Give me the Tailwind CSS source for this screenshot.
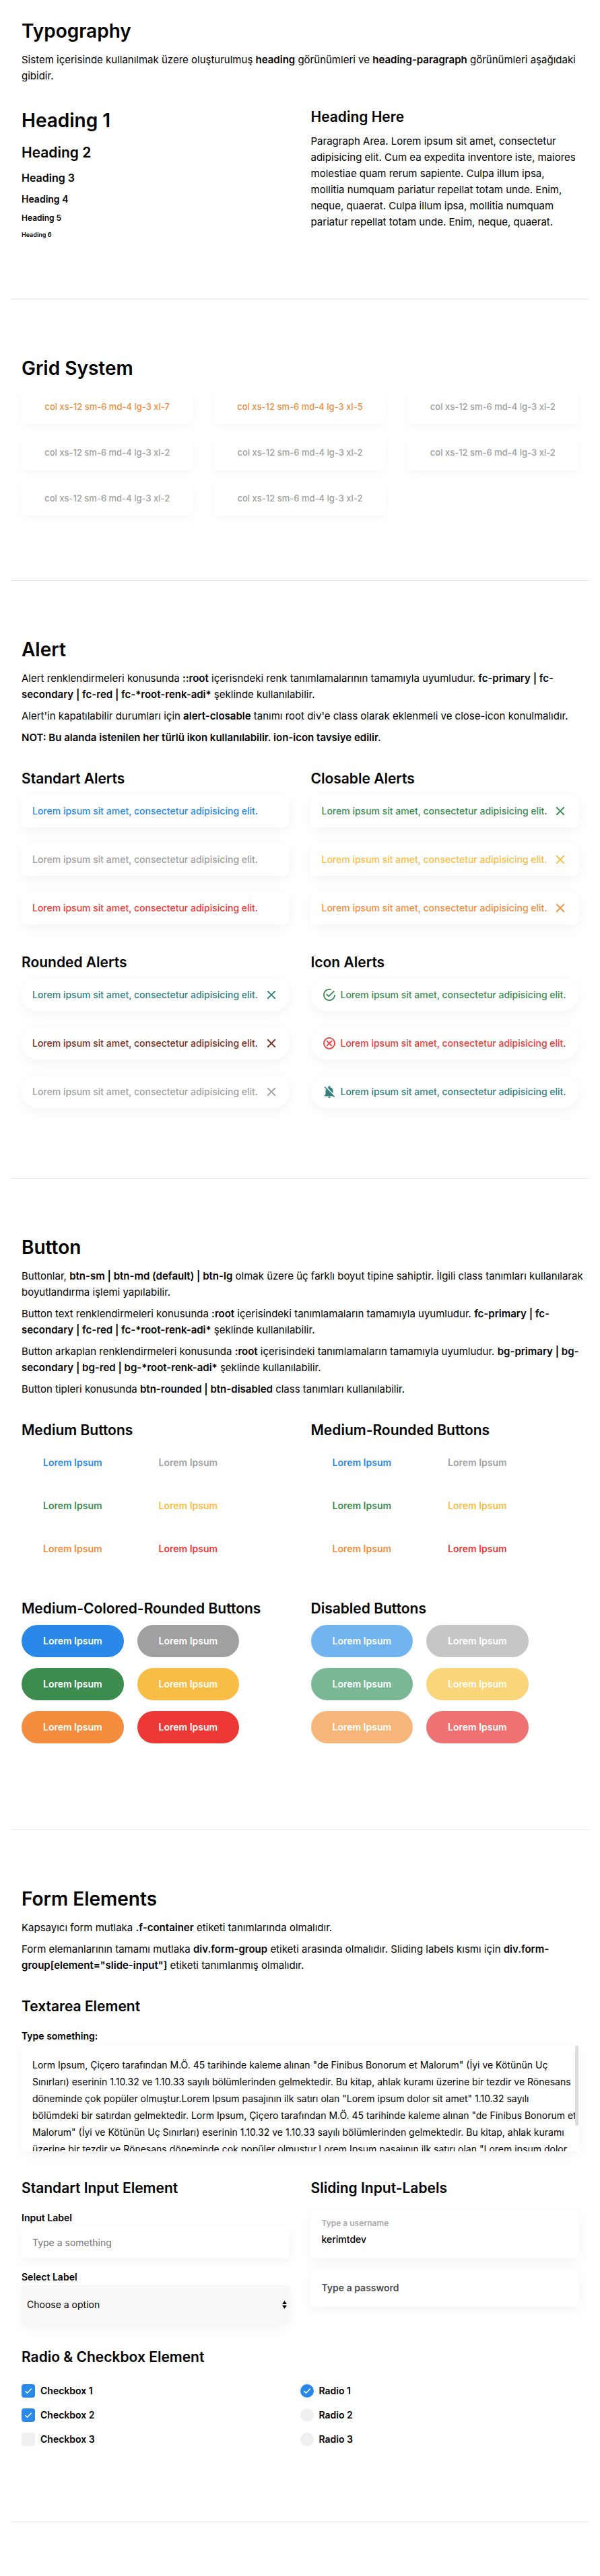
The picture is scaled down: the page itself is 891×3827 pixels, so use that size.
<!DOCTYPE html>
<html lang="tr">
<head>
<meta charset="utf-8">
<meta name="viewport" content="width=device-width, initial-scale=1">
<title>UI Kit</title>
<script src="https://cdn.jsdelivr.net/npm/@tailwindcss/browser@4"></script>
</head>
<body class="bg-white font-[Inter,sans-serif] text-[15px] leading-6 text-black">

<!-- Icon sprite -->
<svg class="hidden" aria-hidden="true">
  <symbol id="i-close" viewBox="0 0 512 512"><path d="M405 136.8L375.2 107 256 226.2 136.8 107 107 136.8 226.2 256 107 375.2 136.8 405 256 285.8 375.2 405 405 375.2 285.8 256z" fill="currentColor"/></symbol>
  <symbol id="i-check-circle" viewBox="0 0 512 512"><path d="M170.7 216.5L141.6 245.6l93.6 93.6 208-208-29.1-29.1L235.2 280l-64.5-63.5zM422.4 256c0 91.5-74.9 166.4-166.4 166.4S89.6 347.5 89.6 256 164.5 89.6 256 89.6c15.6 0 31.2 2.1 45.8 6.2L334 62.6C310 53.2 283 48 256 48 141.6 48 48 141.6 48 256s93.6 208 208 208 208-93.6 208-208h-41.6z" fill="currentColor"/></symbol>
  <symbol id="i-close-circle" viewBox="0 0 512 512"><g fill="none" stroke="currentColor" stroke-width="41"><circle cx="256" cy="256" r="187"/><path d="M167 167l178 178M345 167L167 345"/></g></symbol>
  <symbol id="i-bell-off" viewBox="0 0 24 24"><path d="M20 18.69L7.84 6.14 5.27 3.49 4 4.76l2.8 2.8v.01c-.52.99-.8 2.16-.8 3.42v5l-2 2v1h13.73l2 2L21 19.72l-1-1.03zM12 22c1.11 0 2-.89 2-2h-4c0 1.11.89 2 2 2zm6-7.32V11c0-3.08-1.64-5.64-4.5-6.32V4c0-.83-.67-1.5-1.5-1.5s-1.5.67-1.5 1.5v.68c-.15.03-.29.08-.42.12-.1.03-.2.07-.3.11h-.01c-.01 0-.01 0-.02.01-.23.09-.46.2-.68.31 0 0-.01 0-.01.01L18 14.68z" fill="currentColor"/></symbol>
  <symbol id="i-check" viewBox="0 0 20 20"><path d="M5.5 10.2l3 3 6.2-6.5" fill="none" stroke="#fff" stroke-width="1.5"/></symbol>
</svg>

<main class="px-4 pb-20">

  <!-- Typography -->
  <section class="border-b border-[#e8e8e8] pt-6 pb-20 pl-4">
    <h1 class="mb-2 text-[28px] leading-[45px] font-semibold">Typography</h1>
    <p>Sistem içerisinde kullanılmak üzere oluşturulmuş <b class="font-semibold">heading</b> görünümleri ve <b class="font-semibold">heading-paragraph</b> görünümleri aşağıdaki gibidir.</p>
    <div class="mt-8 mr-4 grid grid-cols-2 gap-x-8">
      <div class="flex flex-col gap-2 pb-2 font-semibold">
        <h1 class="text-[28px] leading-[45px]">Heading 1</h1>
        <h2 class="text-[21px] leading-[33px]">Heading 2</h2>
        <h3 class="text-[16px] leading-[26px]">Heading 3</h3>
        <h4 class="text-[14px] leading-[22px]">Heading 4</h4>
        <h5 class="text-[12px] leading-[18px]">Heading 5</h5>
        <h6 class="text-[9px] leading-[15px]">Heading 6</h6>
      </div>
      <div>
        <h2 class="mb-2 text-[21px] leading-[33px] font-semibold">Heading Here</h2>
        <p>Paragraph Area. Lorem ipsum sit amet, consectetur adipisicing elit. Cum ea expedita inventore iste, maiores molestiae quam rerum sapiente. Culpa illum ipsa, mollitia numquam pariatur repellat totam unde. Enim, neque, quaerat. Culpa illum ipsa, mollitia numquam pariatur repellat totam unde. Enim, neque, quaerat.</p>
      </div>
    </div>
  </section>

  <!-- Grid system -->
  <section class="border-b border-[#e8e8e8] pt-20 pb-24 pl-4">
    <h1 class="mb-2 text-[28px] leading-[45px] font-semibold">Grid System</h1>
    <div class="mr-4 grid grid-cols-3 gap-x-8 gap-y-4 text-center text-[13px] font-medium text-[#a0a0a0]">
      <div class="rounded bg-white px-4 py-[14px] text-[#f38c3c] shadow-[0_5px_15px_rgba(0,0,0,0.03)]">col xs-12 sm-6 md-4 lg-3 xl-7</div>
      <div class="rounded bg-white px-4 py-[14px] text-[#f38c3c] shadow-[0_5px_15px_rgba(0,0,0,0.03)]">col xs-12 sm-6 md-4 lg-3 xl-5</div>
      <div class="rounded bg-white px-4 py-[14px] shadow-[0_5px_15px_rgba(0,0,0,0.03)]">col xs-12 sm-6 md-4 lg-3 xl-2</div>
      <div class="rounded bg-white px-4 py-[14px] shadow-[0_5px_15px_rgba(0,0,0,0.03)]">col xs-12 sm-6 md-4 lg-3 xl-2</div>
      <div class="rounded bg-white px-4 py-[14px] shadow-[0_5px_15px_rgba(0,0,0,0.03)]">col xs-12 sm-6 md-4 lg-3 xl-2</div>
      <div class="rounded bg-white px-4 py-[14px] shadow-[0_5px_15px_rgba(0,0,0,0.03)]">col xs-12 sm-6 md-4 lg-3 xl-2</div>
      <div class="rounded bg-white px-4 py-[14px] shadow-[0_5px_15px_rgba(0,0,0,0.03)]">col xs-12 sm-6 md-4 lg-3 xl-2</div>
      <div class="rounded bg-white px-4 py-[14px] shadow-[0_5px_15px_rgba(0,0,0,0.03)]">col xs-12 sm-6 md-4 lg-3 xl-2</div>
    </div>
  </section>

  <!-- Alerts -->
  <section class="border-b border-[#e8e8e8] pt-20 pb-[104px] pl-4">
    <h1 class="mb-2 text-[28px] leading-[45px] font-semibold">Alert</h1>
    <div class="flex flex-col gap-2">
      <p>Alert renklendirmeleri konusunda <b class="font-semibold">::root</b> içerisndeki renk tanımlamalarının tamamıyla uyumludur. <b class="font-semibold">fc-primary | fc-secondary | fc-red | fc-*root-renk-adi*</b> şeklinde kullanılabilir.</p>
      <p>Alert'in kapatılabilir durumları için <b class="font-semibold">alert-closable</b> tanımı root div'e class olarak eklenmeli ve close-icon konulmalıdır.</p>
      <p class="font-semibold">NOT: Bu alanda istenilen her türlü ikon kullanılabilir. ion-icon tavsiye edilir.</p>
    </div>
    <div class="mt-8 mr-4 grid grid-cols-2 gap-x-8 gap-y-10 text-[14px] font-medium whitespace-nowrap">
      <div class="flex flex-col gap-6">
        <h2 class="-mb-4 text-[21px] leading-[33px] font-semibold">Standart Alerts</h2>
        <div role="alert" class="flex h-12 items-center rounded bg-white px-4 text-[#2988e8] shadow-[0_5px_20px_rgba(0,0,0,0.05)]">Lorem ipsum sit amet, consectetur adipisicing elit.</div>
        <div role="alert" class="flex h-12 items-center rounded bg-white px-4 text-[#a0a0a0] shadow-[0_5px_20px_rgba(0,0,0,0.05)]">Lorem ipsum sit amet, consectetur adipisicing elit.</div>
        <div role="alert" class="flex h-12 items-center rounded bg-white px-4 text-[#ee3835] shadow-[0_5px_20px_rgba(0,0,0,0.05)]">Lorem ipsum sit amet, consectetur adipisicing elit.</div>
      </div>
      <div class="flex flex-col gap-6">
        <h2 class="-mb-4 text-[21px] leading-[33px] font-semibold">Closable Alerts</h2>
        <div role="alert" class="flex h-12 items-center justify-between rounded bg-white px-4 text-[#3c8b4f] shadow-[0_5px_20px_rgba(0,0,0,0.05)]"><span>Lorem ipsum sit amet, consectetur adipisicing elit.</span><button type="button" aria-label="Kapat"><svg class="size-[22px]"><use href="#i-close"/></svg></button></div>
        <div role="alert" class="flex h-12 items-center justify-between rounded bg-white px-4 text-[#f8bd45] shadow-[0_5px_20px_rgba(0,0,0,0.05)]"><span>Lorem ipsum sit amet, consectetur adipisicing elit.</span><button type="button" aria-label="Kapat"><svg class="size-[22px]"><use href="#i-close"/></svg></button></div>
        <div role="alert" class="flex h-12 items-center justify-between rounded bg-white px-4 text-[#f38c3c] shadow-[0_5px_20px_rgba(0,0,0,0.05)]"><span>Lorem ipsum sit amet, consectetur adipisicing elit.</span><button type="button" aria-label="Kapat"><svg class="size-[22px]"><use href="#i-close"/></svg></button></div>
      </div>
      <div class="flex flex-col gap-6">
        <h2 class="-mb-4 text-[21px] leading-[33px] font-semibold">Rounded Alerts</h2>
        <div role="alert" class="flex h-12 items-center justify-between rounded-full bg-white px-4 text-[#31807e] shadow-[0_5px_20px_rgba(0,0,0,0.05)]"><span>Lorem ipsum sit amet, consectetur adipisicing elit.</span><button type="button" aria-label="Kapat"><svg class="size-[22px]"><use href="#i-close"/></svg></button></div>
        <div role="alert" class="flex h-12 items-center justify-between rounded-full bg-white px-4 text-[#7c2d1a] shadow-[0_5px_20px_rgba(0,0,0,0.05)]"><span>Lorem ipsum sit amet, consectetur adipisicing elit.</span><button type="button" aria-label="Kapat"><svg class="size-[22px]"><use href="#i-close"/></svg></button></div>
        <div role="alert" class="flex h-12 items-center justify-between rounded-full bg-white px-4 text-[#a0a0a0] shadow-[0_5px_20px_rgba(0,0,0,0.05)]"><span>Lorem ipsum sit amet, consectetur adipisicing elit.</span><button type="button" aria-label="Kapat"><svg class="size-[22px]"><use href="#i-close"/></svg></button></div>
      </div>
      <div class="flex flex-col gap-6">
        <h2 class="-mb-4 text-[21px] leading-[33px] font-semibold">Icon Alerts</h2>
        <div role="alert" class="flex h-12 items-center gap-[6px] rounded-full bg-white px-4 text-[#3c8b4f] shadow-[0_5px_20px_rgba(0,0,0,0.05)]"><svg class="size-[22px] shrink-0"><use href="#i-check-circle"/></svg><span>Lorem ipsum sit amet, consectetur adipisicing elit.</span></div>
        <div role="alert" class="flex h-12 items-center gap-[6px] rounded-full bg-white px-4 text-[#ee3835] shadow-[0_5px_20px_rgba(0,0,0,0.05)]"><svg class="size-[22px] shrink-0"><use href="#i-close-circle"/></svg><span>Lorem ipsum sit amet, consectetur adipisicing elit.</span></div>
        <div role="alert" class="flex h-12 items-center gap-[6px] rounded-full bg-white px-4 text-[#31807e] shadow-[0_5px_20px_rgba(0,0,0,0.05)]"><svg class="size-[22px] shrink-0"><use href="#i-bell-off"/></svg><span>Lorem ipsum sit amet, consectetur adipisicing elit.</span></div>
      </div>
    </div>
  </section>

  <!-- Buttons -->
  <section class="border-b border-[#e8e8e8] pt-20 pb-32 pl-4">
    <h1 class="mb-2 text-[28px] leading-[45px] font-semibold">Button</h1>
    <div class="flex flex-col gap-2">
      <p>Buttonlar, <b class="font-semibold">btn-sm | btn-md (default) | btn-lg</b> olmak üzere üç farklı boyut tipine sahiptir. İlgili class tanımları kullanılarak boyutlandırma işlemi yapılabilir.</p>
      <p>Button text renklendirmeleri konusunda <b class="font-semibold">:root</b> içerisindeki tanımlamaların tamamıyla uyumludur. <b class="font-semibold">fc-primary | fc-secondary | fc-red | fc-*root-renk-adi*</b> şeklinde kullanılabilir.</p>
      <p>Button arkaplan renklendirmeleri konusunda <b class="font-semibold">:root</b> içerisindeki tanımlamaların tamamıyla uyumludur. <b class="font-semibold">bg-primary | bg-secondary | bg-red | bg-*root-renk-adi*</b> şeklinde kullanılabilir.</p>
      <p>Button tipleri konusunda <b class="font-semibold">btn-rounded | btn-disabled</b> class tanımları kullanılabilir.</p>
    </div>
    <div class="mt-8 mr-4 grid grid-cols-2 gap-x-8 gap-y-12 text-[14px]">
      <div>
        <h2 class="mb-2 text-[21px] leading-[33px] font-semibold">Medium Buttons</h2>
        <div class="grid w-fit grid-cols-2 gap-x-5 gap-y-4 font-semibold">
          <button type="button" class="h-12 rounded px-8 text-[#2988e8]">Lorem Ipsum</button>
          <button type="button" class="h-12 rounded px-8 text-[#a0a0a0]">Lorem Ipsum</button>
          <button type="button" class="h-12 rounded px-8 text-[#3c8b4f]">Lorem Ipsum</button>
          <button type="button" class="h-12 rounded px-8 text-[#f8bd45]">Lorem Ipsum</button>
          <button type="button" class="h-12 rounded px-8 text-[#f38c3c]">Lorem Ipsum</button>
          <button type="button" class="h-12 rounded px-8 text-[#ee3835]">Lorem Ipsum</button>
        </div>
      </div>
      <div>
        <h2 class="mb-2 text-[21px] leading-[33px] font-semibold">Medium-Rounded Buttons</h2>
        <div class="grid w-fit grid-cols-2 gap-x-5 gap-y-4 font-semibold">
          <button type="button" class="h-12 rounded-full px-8 text-[#2988e8]">Lorem Ipsum</button>
          <button type="button" class="h-12 rounded-full px-8 text-[#a0a0a0]">Lorem Ipsum</button>
          <button type="button" class="h-12 rounded-full px-8 text-[#3c8b4f]">Lorem Ipsum</button>
          <button type="button" class="h-12 rounded-full px-8 text-[#f8bd45]">Lorem Ipsum</button>
          <button type="button" class="h-12 rounded-full px-8 text-[#f38c3c]">Lorem Ipsum</button>
          <button type="button" class="h-12 rounded-full px-8 text-[#ee3835]">Lorem Ipsum</button>
        </div>
      </div>
      <div>
        <h2 class="mb-2 text-[21px] leading-[33px] font-semibold">Medium-Colored-Rounded Buttons</h2>
        <div class="grid w-fit grid-cols-2 gap-x-5 gap-y-4 font-semibold text-white">
          <button type="button" class="h-12 rounded-full bg-[#2988e8] px-8">Lorem Ipsum</button>
          <button type="button" class="h-12 rounded-full bg-[#a0a0a0] px-8">Lorem Ipsum</button>
          <button type="button" class="h-12 rounded-full bg-[#3c8b4f] px-8">Lorem Ipsum</button>
          <button type="button" class="h-12 rounded-full bg-[#f8bd45] px-8">Lorem Ipsum</button>
          <button type="button" class="h-12 rounded-full bg-[#f38c3c] px-8">Lorem Ipsum</button>
          <button type="button" class="h-12 rounded-full bg-[#ee3835] px-8">Lorem Ipsum</button>
        </div>
      </div>
      <div>
        <h2 class="mb-2 text-[21px] leading-[33px] font-semibold">Disabled Buttons</h2>
        <div class="grid w-fit grid-cols-2 gap-x-5 gap-y-4 font-semibold text-white">
          <button type="button" disabled class="h-12 rounded-full bg-[#72b4f0] px-8">Lorem Ipsum</button>
          <button type="button" disabled class="h-12 rounded-full bg-[#c6c6c6] px-8">Lorem Ipsum</button>
          <button type="button" disabled class="h-12 rounded-full bg-[#7ab895] px-8">Lorem Ipsum</button>
          <button type="button" disabled class="h-12 rounded-full bg-[#fad57a] px-8">Lorem Ipsum</button>
          <button type="button" disabled class="h-12 rounded-full bg-[#f7b679] px-8">Lorem Ipsum</button>
          <button type="button" disabled class="h-12 rounded-full bg-[#ef7171] px-8">Lorem Ipsum</button>
        </div>
      </div>
    </div>
  </section>

  <!-- Form elements -->
  <section class="border-b border-[#e8e8e8] pt-20 pb-28 pl-4">
    <h1 class="mb-2 text-[28px] leading-[45px] font-semibold">Form Elements</h1>
    <div class="flex flex-col gap-2">
      <p>Kapsayıcı form mutlaka <b class="font-semibold">.f-container</b> etiketi tanımlarında olmalıdır.</p>
      <p>Form elemanlarının tamamı mutlaka <b class="font-semibold">div.form-group</b> etiketi arasında olmalıdır. Sliding labels kısmı için <b class="font-semibold">div.form-group[element="slide-input"]</b> etiketi tanımlanmış olmalıdır.</p>
    </div>
    <form class="mt-8 mr-4 text-[14px]">
      <h2 class="mb-4 text-[21px] leading-[33px] font-semibold">Textarea Element</h2>
      <label for="message" class="mb-[2px] block font-semibold">Type something:</label>
      <div class="relative">
        <textarea id="message" class="block h-[157px] w-full resize-none overflow-x-hidden overflow-y-auto rounded bg-white py-4 pl-4 leading-[25px] whitespace-pre shadow-[0_5px_20px_rgba(0,0,0,0.05)] outline-none [scrollbar-width:none]">Lorm Ipsum, Çiçero tarafından M.Ö. 45 tarihinde kaleme alınan "de Finibus Bonorum et Malorum" (İyi ve Kötünün Uç
Sınırları) eserinin 1.10.32 ve 1.10.33 sayılı bölümlerinden gelmektedir. Bu kitap, ahlak kuramı üzerine bir tezdir ve Rönesans
döneminde çok popüler olmuştur.Lorem Ipsum pasajının ilk satırı olan "Lorem ipsum dolor sit amet" 1.10.32 sayılı
bölümdeki bir satırdan gelmektedir. Lorm Ipsum, Çiçero tarafından M.Ö. 45 tarihinde kaleme alınan "de Finibus Bonorum et
Malorum" (İyi ve Kötünün Uç Sınırları) eserinin 1.10.32 ve 1.10.33 sayılı bölümlerinden gelmektedir. Bu kitap, ahlak kuramı
üzerine bir tezdir ve Rönesans döneminde çok popüler olmuştur.Lorem Ipsum pasajının ilk satırı olan "Lorem ipsum dolor
sit amet" 1.10.32 sayılı bölümdeki bir satırdan gelmektedir.</textarea>
        <!-- Scroll thumb -->
        <div class="pointer-events-none absolute top-0 right-0 h-[119px] w-[5px] rounded-full bg-[#dddddd]"></div>
      </div>

      <div class="mt-[38px] grid grid-cols-2 gap-x-8">
        <div>
          <h2 class="mb-4 text-[21px] leading-[33px] font-semibold">Standart Input Element</h2>
          <label for="something" class="block font-semibold">Input Label</label>
          <input id="something" type="text" placeholder="Type a something" class="block h-12 w-full rounded bg-white px-4 shadow-[0_5px_20px_rgba(0,0,0,0.05)] outline-none placeholder:text-[#757575]">
          <label for="option" class="mt-4 block font-semibold">Select Label</label>
          <div class="grid items-center">
            <select id="option" class="col-start-1 row-start-1 h-[58px] w-full appearance-none rounded bg-[#f8f8f8] px-2 shadow-[0_5px_20px_rgba(0,0,0,0.05)] outline-none">
              <option>Choose a option</option>
            </select>
            <svg class="pointer-events-none z-10 col-start-1 row-start-1 mr-1 h-3 w-[7px] justify-self-end" viewBox="0 0 7 12"><path d="M3.5 0L6.8 5H.2zM3.5 12L6.8 7H.2z"/></svg>
          </div>
        </div>
        <div>
          <h2 class="mb-4 text-[21px] leading-[33px] font-semibold">Sliding Input-Labels</h2>
          <div class="flex h-[72px] flex-col rounded bg-white px-4 pt-2 shadow-[0_5px_20px_rgba(0,0,0,0.05)]">
            <label for="username" class="text-[12px] font-semibold text-[#aaaaaa]">Type a username</label>
            <input id="username" type="text" value="kerimtdev" class="h-6 w-full font-medium outline-none">
          </div>
          <div class="mt-4 grid h-14 items-center rounded bg-white shadow-[0_5px_20px_rgba(0,0,0,0.05)]">
            <input id="password" type="password" class="col-start-1 row-start-1 h-14 w-full rounded px-4 outline-none">
            <label for="password" class="col-start-1 row-start-1 px-4 font-semibold text-[#4d4d4d]">Type a password</label>
          </div>
        </div>
      </div>

      <h2 class="mt-8 mb-6 text-[21px] leading-[33px] font-semibold">Radio &amp; Checkbox Element</h2>
      <div class="grid grid-cols-2 gap-y-4 leading-5 font-semibold">
        <label class="grid w-fit grid-cols-[20px_auto] gap-x-2"><input type="checkbox" checked class="peer col-start-1 row-start-1 size-5 appearance-none rounded bg-[#f0f0f0] checked:bg-[#2988e8]"><svg class="pointer-events-none invisible col-start-1 row-start-1 size-5 peer-checked:visible"><use href="#i-check"/></svg><span>Checkbox 1</span></label>
        <label class="grid w-fit grid-cols-[20px_auto] gap-x-2"><input type="radio" name="radio" checked class="peer col-start-1 row-start-1 size-5 appearance-none rounded-full bg-[#f0f0f0] checked:bg-[#2988e8]"><svg class="pointer-events-none invisible col-start-1 row-start-1 size-5 peer-checked:visible"><use href="#i-check"/></svg><span>Radio 1</span></label>
        <label class="grid w-fit grid-cols-[20px_auto] gap-x-2"><input type="checkbox" checked class="peer col-start-1 row-start-1 size-5 appearance-none rounded bg-[#f0f0f0] checked:bg-[#2988e8]"><svg class="pointer-events-none invisible col-start-1 row-start-1 size-5 peer-checked:visible"><use href="#i-check"/></svg><span>Checkbox 2</span></label>
        <label class="grid w-fit grid-cols-[20px_auto] gap-x-2"><input type="radio" name="radio" class="peer col-start-1 row-start-1 size-5 appearance-none rounded-full bg-[#f0f0f0] checked:bg-[#2988e8]"><svg class="pointer-events-none invisible col-start-1 row-start-1 size-5 peer-checked:visible"><use href="#i-check"/></svg><span>Radio 2</span></label>
        <label class="grid w-fit grid-cols-[20px_auto] gap-x-2"><input type="checkbox" class="peer col-start-1 row-start-1 size-5 appearance-none rounded bg-[#f0f0f0] checked:bg-[#2988e8]"><svg class="pointer-events-none invisible col-start-1 row-start-1 size-5 peer-checked:visible"><use href="#i-check"/></svg><span>Checkbox 3</span></label>
        <label class="grid w-fit grid-cols-[20px_auto] gap-x-2"><input type="radio" name="radio" class="peer col-start-1 row-start-1 size-5 appearance-none rounded-full bg-[#f0f0f0] checked:bg-[#2988e8]"><svg class="pointer-events-none invisible col-start-1 row-start-1 size-5 peer-checked:visible"><use href="#i-check"/></svg><span>Radio 3</span></label>
      </div>
    </form>
  </section>
</main>
</body>
</html>
